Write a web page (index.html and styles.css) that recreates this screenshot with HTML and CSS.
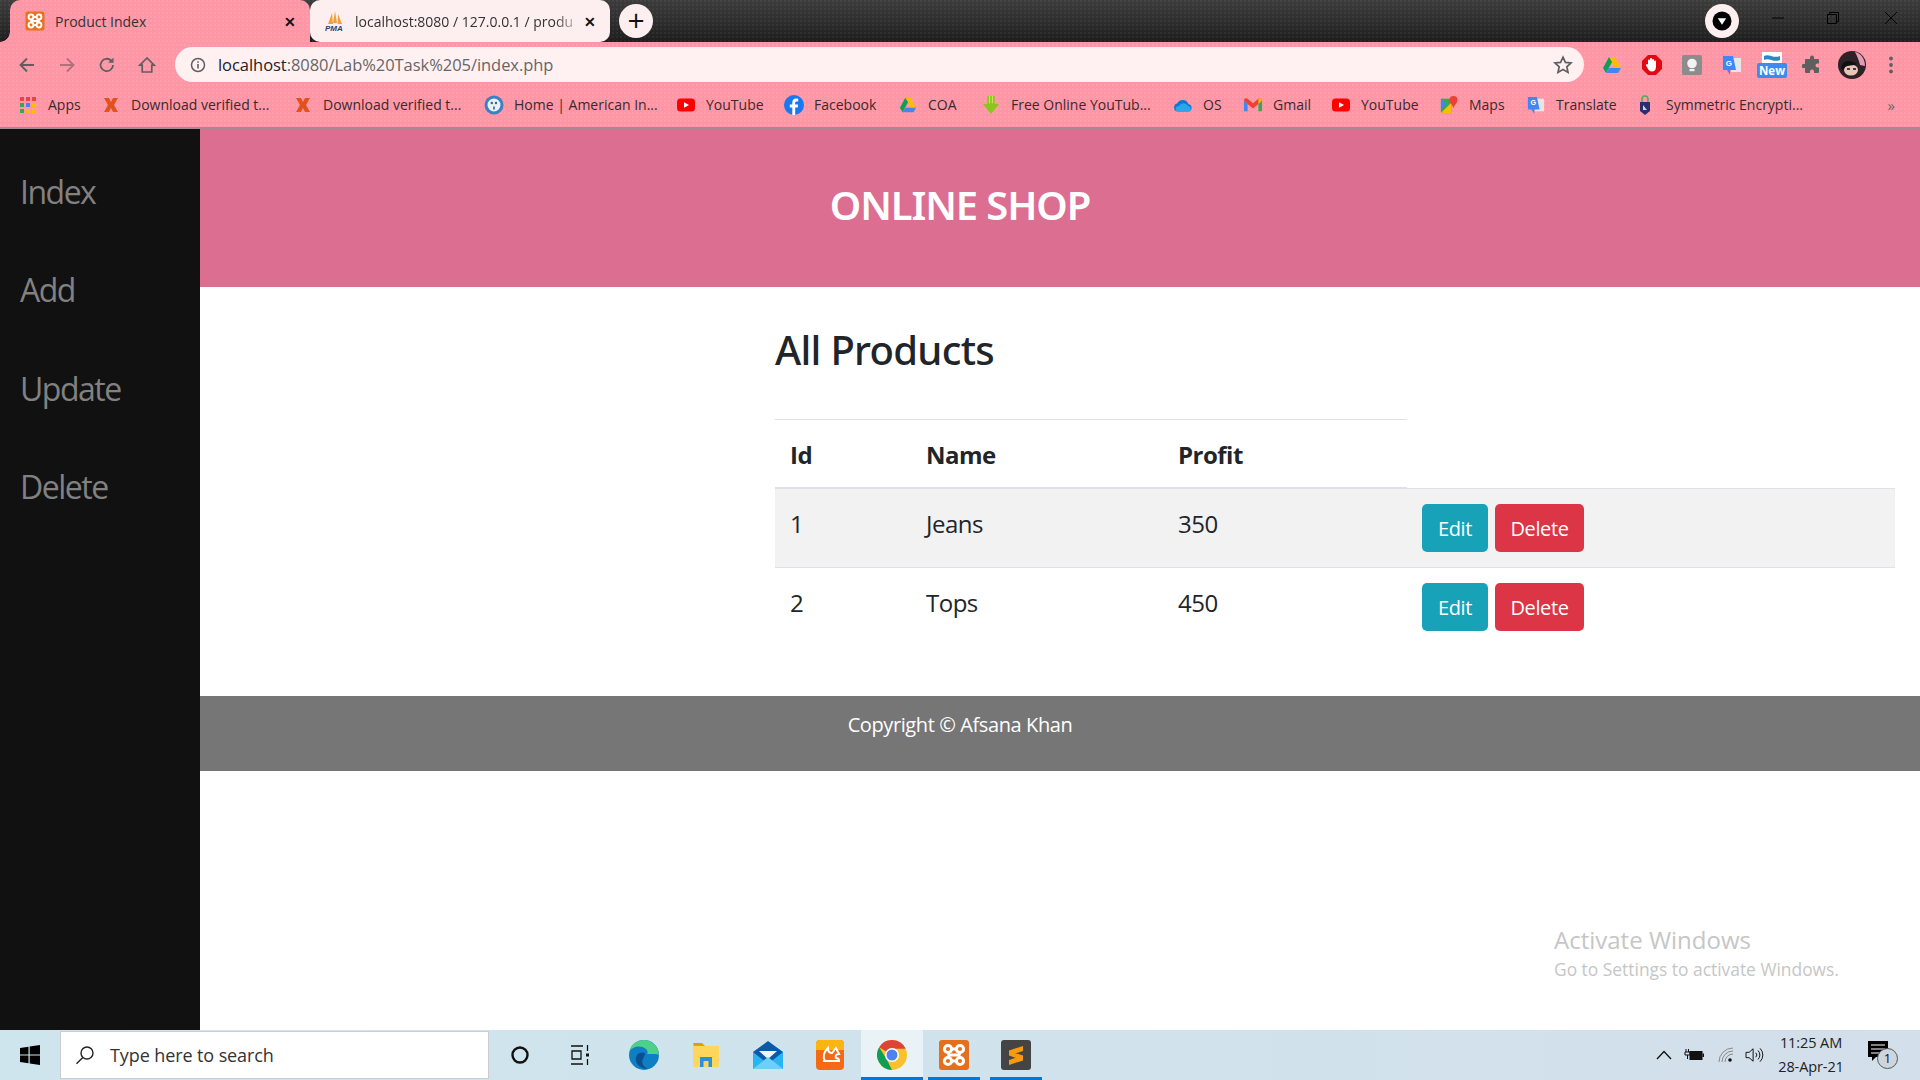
FILE: index.html
```html
<!DOCTYPE html>
<html lang="en">
<head>
  <meta charset="UTF-8" />
  <title>Product Index</title>
  <link rel="stylesheet" href="styles.css">
</head>
<body>
  <div class="browser">
    <div class="tabstrip">
      <div class="tab tab-active">
        <svg class="favicon" viewBox="0 0 20 20"><rect x="0.500" y="0.500" width="19" height="19" rx="2.500" fill="#e8701f"/><g fill="none" stroke="#fff" stroke-width="2"><circle cx="6" cy="6" r="2.400"/><circle cx="14" cy="6" r="2.400"/><circle cx="6" cy="14" r="2.400"/><circle cx="14" cy="14" r="2.400"/><path d="M6 8.400c0 1 1 1.600 1.500 1.600S6 10.600 6 11.600M14 8.400c0 1-1 1.600-1.500 1.600s1.500.6 1.500 1.600M8.400 6h3.200M8.400 14h3.200M7.500 10h5"/></g></svg>
        <span class="tab-title">Product Index</span>
        <span class="tab-close">✕</span>
      </div>
      <div class="tab tab-other">
        <svg class="favicon" viewBox="0 0 20 20"><path d="M3 13 7 2l1 11zM8 12l2-12 2 12zM12.500 13 13 3l4 10z" fill="#f0a23a"/><text x="0" y="19.500" class="pma">PMA</text></svg>
        <span class="tab-title tab-fade">localhost:8080 / 127.0.0.1 / produ</span>
        <span class="tab-close">✕</span>
      </div>
      <div class="new-tab">+</div>
      <div class="frame-right">
        <div class="profile-dot"><svg viewBox="0 0 22 22" width="22" height="22"><circle cx="11" cy="11" r="9.500" fill="#000"/><path d="M6.800 8.200h8.400L11 14.800z" fill="#fff"/></svg></div>
        <svg class="win-btn win-min" viewBox="0 0 14 14"><path d="M1 7h12" stroke="#000" fill="none"/></svg>
        <svg class="win-btn win-max" viewBox="0 0 14 14"><path d="M1.500 3.500h9v9h-9zM3.500 3.500v-2h9v9h-2" stroke="#000" fill="none"/></svg>
        <svg class="win-btn win-close" viewBox="0 0 14 14"><path d="M1 1l12 12M13 1 1 13" stroke="#000" fill="none"/></svg>
      </div>
    </div>

    <div class="toolbar">
      <svg class="nav-icon" viewBox="0 0 20 20"><path d="M17 10H4M10 3.500 3.500 10l6.500 6.500" fill="none" stroke="#5f5f5f" stroke-width="1.800"/></svg>
      <svg class="nav-icon" viewBox="0 0 20 20"><path d="M3 10h13M10 3.500l6.500 6.500-6.500 6.500" fill="none" stroke="#b0717c" stroke-width="1.800"/></svg>
      <svg class="nav-icon" viewBox="0 0 20 20"><path d="M16 10a6.200 6.200 0 1 1-1.800-4.400" fill="none" stroke="#5f5f5f" stroke-width="1.800"/><path d="M16.500 2.500v5.300h-5.300z" fill="#5f5f5f"/></svg>
      <svg class="nav-icon nav-home" viewBox="0 0 20 20"><path d="M10 3 2.800 10.200h2.400V17h9.600v-6.800h2.400z" fill="none" stroke="#5f5f5f" stroke-width="1.700"/></svg>
      <div class="omnibox">
        <svg class="info-icon" viewBox="0 0 16 16"><circle cx="8" cy="8" r="6.500" fill="none" stroke="#5f5f5f" stroke-width="1.500"/><path d="M8 7v4.500M8 4.300v1.500" stroke="#5f5f5f" stroke-width="1.600"/></svg>
        <span class="url"><span class="url-host">localhost</span>:8080/Lab%20Task%205/index.php</span>
        <svg class="star-icon" viewBox="0 0 20 20"><path d="m10 2.200 2.400 5.200 5.600.6-4.200 3.800 1.200 5.600-5-2.900-5 2.900 1.200-5.600L2 8l5.600-.6z" fill="none" stroke="#5f5f5f" stroke-width="1.700"/></svg>
      </div>
      <div class="ext-icons">
        <svg class="ext" viewBox="0 0 20 20"><path d="M7 2h6l6 11h-6z" fill="#fbbc04"/><path d="M7 2 1 13l3 5 6-11z" fill="#0f9d58"/><path d="M4 18h12l3-5H7z" fill="#4285f4"/></svg>
        <svg class="ext" viewBox="0 0 20 20"><path d="M6 0h8l6 6v8l-6 6H6l-6-6V6z" fill="#e30613"/><path d="M6 9V5.500a1 1 0 0 1 2 0V4a1 1 0 0 1 2 0v1a1 1 0 0 1 2 0v1.500a1 1 0 0 1 2 0V12c0 3-2 4.500-4 4.500-2.500 0-3.500-1.500-4.500-3.500L4 10.500c-.5-1 .8-1.800 1.500-1z" fill="#fff"/></svg>
        <svg class="ext" viewBox="0 0 20 20"><rect width="20" height="20" rx="2" fill="#8c8c8c"/><circle cx="10" cy="8.500" r="4.800" fill="#f2f2f2"/><rect x="7.500" y="14" width="5" height="2.200" fill="#f2f2f2"/></svg>
        <svg class="ext" viewBox="0 0 20 20"><path d="M9 3h10v14H9z" fill="#e6e6e6"/><path d="M1 1h10l3 14H8v5l-3-5H1z" fill="#4285f4"/><text x="3.800" y="10.500" class="ext-g">G</text></svg>
        <div class="ext ext-new"><svg viewBox="0 0 20 12"><rect width="20" height="12" fill="#fff"/><path d="M2 4c5-3 9 3 16 0v4C11 11 7 5 2 8z" fill="#2e86c9"/></svg><span class="new-label">New</span></div>
        <svg class="ext" viewBox="0 0 20 20"><path d="M8 2.500a2 2 0 0 1 4 0V4h4a1 1 0 0 1 1 1v3.500h-1.500a2 2 0 0 0 0 4H17V17a1 1 0 0 1-1 1h-4v-1.500a2 2 0 0 0-4 0V18H4a1 1 0 0 1-1-1v-4H1.500a2 2 0 0 1 0-4H3V5a1 1 0 0 1 1-1h4z" fill="#5f5f5f"/></svg>
        <svg class="ext ext-avatar" viewBox="0 0 28 28"><circle cx="14" cy="14" r="14" fill="#2e2226"/><path d="M17 1c6 1 10 7 10 14l-5-1c-1-5-3-9-5-13z" fill="#e59ab5"/><ellipse cx="13" cy="19" rx="7" ry="5.500" fill="#e9c6b8"/><path d="M3 17C4 9 12 8 19 13c-4 2-9 1-12 3-1 2-2 4-4 1z" fill="#111"/><path d="M9 18h3M15 18h3" stroke="#111" stroke-width="1.500"/></svg>
        <svg class="ext ext-dots" viewBox="0 0 20 20"><circle cx="10" cy="3.500" r="1.900" fill="#5f5f5f"/><circle cx="10" cy="10" r="1.900" fill="#5f5f5f"/><circle cx="10" cy="16.500" r="1.900" fill="#5f5f5f"/></svg>
      </div>
    </div>

    <div class="bookmarks">
      <div class="bm"><svg class="bm-icon bm-small" viewBox="0 0 16 16"><rect x="0" y="0" width="4" height="4" fill="#e8453c"/><rect x="6" y="0" width="4" height="4" fill="#e8453c"/><rect x="12" y="0" width="4" height="4" fill="#e8453c"/><rect x="0" y="6" width="4" height="4" fill="#34a853"/><rect x="6" y="6" width="4" height="4" fill="#4285f4"/><rect x="12" y="6" width="4" height="4" fill="#fbbc04"/><rect x="0" y="12" width="4" height="4" fill="#34a853"/><rect x="6" y="12" width="4" height="4" fill="#fbbc04"/><rect x="12" y="12" width="4" height="4" fill="#fbbc04"/></svg>Apps</div>
      <div class="bm"><svg class="bm-icon bm-small" viewBox="0 0 16 16"><path d="M1 1h5l2 4 2-4h5l-4 7 4 7h-5l-2-4-2 4H1l4-7z" fill="#e2521d"/></svg>Download verified t...</div>
      <div class="bm"><svg class="bm-icon bm-small" viewBox="0 0 16 16"><path d="M1 1h5l2 4 2-4h5l-4 7 4 7h-5l-2-4-2 4H1l4-7z" fill="#e2521d"/></svg>Download verified t...</div>
      <div class="bm"><svg class="bm-icon bm-wide" viewBox="0 0 20 20"><circle cx="10" cy="10" r="9.500" fill="#3f7fbf"/><circle cx="10" cy="10" r="6.500" fill="#e9f1f8"/><circle cx="7.800" cy="8" r="1.200" fill="#3f5f8f"/><circle cx="12" cy="8" r="1.200" fill="#3f5f8f"/><path d="M10 11.500v3" stroke="#3f5f8f" stroke-width="1.600"/></svg>Home | American In...</div>
      <div class="bm"><svg class="bm-icon" viewBox="0 0 18 18"><rect y="2.500" width="18" height="13" rx="3.500" fill="#f00"/><path d="M7 6.200 12 9l-5 2.800z" fill="#fff"/></svg>YouTube</div>
      <div class="bm"><svg class="bm-icon bm-wide" viewBox="0 0 20 20"><circle cx="10" cy="10" r="10" fill="#1877f2"/><path d="M11.200 20v-7.500h2.500l.4-3h-2.900V7.800c0-.9.300-1.400 1.500-1.400h1.500V3.700c-.3 0-1.200-.1-2.200-.1-2.200 0-3.700 1.300-3.700 3.800v2.100H5.800v3h2.500V20z" fill="#fff"/></svg>Facebook</div>
      <div class="bm"><svg class="bm-icon" viewBox="0 0 20 20"><path d="M7 2h6l6 11h-6z" fill="#fbbc04"/><path d="M7 2 1 13l3 5 6-11z" fill="#0f9d58"/><path d="M4 18h12l3-5H7z" fill="#4285f4"/></svg>COA</div>
      <div class="bm"><svg class="bm-icon" viewBox="0 0 18 20"><path d="M5 0h8v9h5l-9 11L0 9h5z" fill="#8bc61a"/><path d="M7 0h1v8H7zM10 0h1v8h-1z" fill="#d9ee6a"/></svg>Free Online YouTub...</div>
      <div class="bm"><svg class="bm-icon bm-wide" viewBox="0 0 20 14"><path d="M5 13.500a4 4 0 0 1-.8-7.900A6 6 0 0 1 15.300 6a3.800 3.800 0 0 1 .2 7.500z" fill="#0f78d4"/><path d="M4 13.500a3 3 0 0 1 2-5.500 5 5 0 0 1 9 0 3 3 0 0 1 1.500 5.500z" fill="#28a8ea"/></svg>OS</div>
      <div class="bm"><svg class="bm-icon" viewBox="0 0 20 16"><path d="M0 3v11a1 1 0 0 0 1 1h3V7z" fill="#4285f4"/><path d="M20 3v11a1 1 0 0 1-1 1h-3V7z" fill="#34a853"/><path d="M0 3c0-2.500 2.500-3 4-2l6 5 6-5c1.500-1 4-.5 4 2l-4 4-6 5-6-5z" fill="#ea4335"/><path d="M16 1c1.500-1 4-.5 4 2l-4 4z" fill="#fbbc04"/></svg>Gmail</div>
      <div class="bm"><svg class="bm-icon" viewBox="0 0 18 18"><rect y="2.500" width="18" height="13" rx="3.500" fill="#f00"/><path d="M7 6.200 12 9l-5 2.800z" fill="#fff"/></svg>YouTube</div>
      <div class="bm"><svg class="bm-icon" viewBox="0 0 20 20"><path d="M1 3h12v16H1z" fill="#35a853"/><path d="M1 19 13 7v12z" fill="#fbbc04"/><path d="M1 3l6 6-6 6z" fill="#4285f4"/><path d="M15 0a4.500 4.500 0 0 1 4.500 4.500c0 3-3.500 5.500-4.500 9-1-3.500-4.500-6-4.500-9A4.500 4.500 0 0 1 15 0z" fill="#ea4335"/></svg>Maps</div>
      <div class="bm"><svg class="bm-icon" viewBox="0 0 20 20"><path d="M9 3h10v14H9z" fill="#e6e6e6"/><path d="M1 1h10l3 14H8v5l-3-5H1z" fill="#4285f4"/><text x="3.800" y="10.500" class="ext-g">G</text></svg>Translate</div>
      <div class="bm"><svg class="bm-icon bm-thin" viewBox="0 0 12 20"><path d="M3 8V4a3 3 0 0 1 6 0v4" fill="none" stroke="#5aa469" stroke-width="1.600"/><path d="M1 7h10v9l-5 4-5-4z" fill="#2b2d6e"/><path d="M4 10l4 5H4z" fill="#c9d4ee"/></svg>Symmetric Encrypti...</div>
      <div class="bm-more">»</div>
    </div>
  </div>

  <div class="page">
    <nav class="sidenav">
      <a href="#">Index</a>
      <a href="#">Add</a>
      <a href="#">Update</a>
      <a href="#">Delete</a>
    </nav>
    <div class="main">
      <header class="site-header"><h1>ONLINE SHOP</h1></header>
      <section class="products">
        <h2>All Products</h2>
        <table class="product-table">
          <thead>
            <tr><th class="col-id">Id</th><th class="col-name">Name</th><th class="col-profit">Profit</th></tr>
          </thead>
          <tbody>
            <tr>
              <td>1</td><td>Jeans</td><td>350</td>
              <td class="actions"><a class="btn btn-edit" href="#">Edit</a><a class="btn btn-delete" href="#">Delete</a></td>
            </tr>
            <tr>
              <td>2</td><td>Tops</td><td>450</td>
              <td class="actions"><a class="btn btn-edit" href="#">Edit</a><a class="btn btn-delete" href="#">Delete</a></td>
            </tr>
          </tbody>
        </table>
      </section>
      <footer class="site-footer">Copyright © Afsana Khan</footer>
    </div>
    <div class="activate">
      <div class="activate-title">Activate Windows</div>
      <div class="activate-sub">Go to Settings to activate Windows.</div>
    </div>
  </div>

  <div class="taskbar">
    <div class="start"><svg viewBox="0 0 20 20" width="20" height="20"><path d="M0 3l8.500-1.200V9.500H0zM9.700 1.600 20 0v9.500H9.700zM0 10.600h8.500v7.700L0 17zM9.700 10.600H20V20L9.700 18.500z" fill="#000"/></svg></div>
    <div class="search">
      <svg class="search-icon" viewBox="0 0 20 20"><circle cx="12" cy="8" r="6" fill="none" stroke="#222" stroke-width="1.400"/><path d="M7.800 12.400 1.500 18.800" stroke="#222" stroke-width="1.400"/></svg>
      <span>Type here to search</span>
    </div>
    <div class="task-item"><svg viewBox="0 0 20 20" width="20" height="20"><circle cx="10" cy="10" r="7.500" fill="none" stroke="#111" stroke-width="2.400"/></svg></div>
    <div class="task-item"><svg viewBox="2 0 22 22" width="22" height="22"><path d="M1 2h13M1 20h13M3 7h9v8H3zM18.500 1v6M18.500 15v6" fill="none" stroke="#111" stroke-width="1.300"/><rect x="17" y="9.500" width="3" height="3" fill="#111"/></svg></div>
    <div class="task-item"><svg viewBox="0 0 30 30" width="30" height="30"><circle cx="15" cy="15" r="15" fill="#0f7fc4"/><path d="M30 16C30 6 22 0 15 0 8 0 2 4 .5 11 4 6 12 5 17 9c2 2 2 4 1 5h5c4 0 7 0 7 2z" fill="#4dd08a"/><path d="M16 13c-6-2-10 2-9 8 1 5 7 8 12 8-5-2-7-7-5-10 1-2 2-4 2-6z" fill="#0a4f8f"/></svg></div>
    <div class="task-item"><svg viewBox="0 0 28 26" width="28" height="26"><path d="M1 2a1 1 0 0 1 1-1h8l3 3H2z" fill="#dfa100"/><path d="M1 4h26v20a1 1 0 0 1-1 1H2a1 1 0 0 1-1-1z" fill="#ffd65c"/><path d="M8 25V15h12v10h-3.500v-6h-5v6z" fill="#2b8fd9"/></svg></div>
    <div class="task-item"><svg viewBox="0 0 30 30" width="30" height="30"><path d="M0 12 15 1l15 11v17H0z" fill="#0a5aa8"/><path d="M6 11h18l-9 8z" fill="#f4f4f4"/><path d="M0 12l15 12L30 12v17H0z" fill="#29b6f0"/><path d="M0 29 15 17l15 12z" fill="#6fd0f7"/></svg></div>
    <div class="task-item"><svg viewBox="0 0 28 30" width="28" height="30"><rect width="28" height="30" rx="4" fill="#f66a14"/><path d="M0 4a4 4 0 0 1 4-4h20a4 4 0 0 1 4 4v6H0z" fill="#fbb511"/><path d="M9 21c-3-5 0-10 3-13 0 3 1 5 4 5l4-5 3 6c-3 0-4 2-3 4 2 0 3 1 3 3H8c0-1 0-1 1 0z" fill="none" stroke="#fff" stroke-width="2"/></svg></div>
    <div class="task-item task-active"><svg viewBox="0 0 30 30" width="30" height="30"><circle cx="15" cy="15" r="15" fill="#fbc02d"/><path d="M15 15 2.200 7.300A15 15 0 0 1 28.600 8.700H15z" fill="#db4437"/><path d="M15 30A15 15 0 0 1 2.200 7.300L10 20z" fill="#0f9d58"/><circle cx="15" cy="15" r="7" fill="#fff"/><circle cx="15" cy="15" r="5.500" fill="#4d82f0"/></svg></div>
    <div class="task-item task-open"><svg viewBox="0 0 20 20" width="30" height="30"><rect width="20" height="20" rx="2" fill="#e4701e"/><g fill="none" stroke="#fff" stroke-width="2"><circle cx="6" cy="6" r="2.400"/><circle cx="14" cy="6" r="2.400"/><circle cx="6" cy="14" r="2.400"/><circle cx="14" cy="14" r="2.400"/><path d="M6 8.400c0 1 1 1.600 1.500 1.600S6 10.600 6 11.600M14 8.400c0 1-1 1.600-1.500 1.600s1.500.6 1.500 1.600M8.400 6h3.200M8.400 14h3.200M7.500 10h5"/></g></svg></div>
    <div class="task-item task-open"><svg viewBox="0 0 30 30" width="30" height="30"><rect width="30" height="30" rx="3" fill="#444"/><path d="M22 6v5L8 15.500v-5zM8 11l14 4.500v5L8 15.500zM22 15.500v5L8 25v-5z" fill="#f79a0e"/></svg></div>
    <div class="tray">
      <svg class="tray-icon tray-up" viewBox="0 0 16 10"><path d="M1 9 8 1.500 15 9" fill="none" stroke="#111" stroke-width="1.300"/></svg>
      <svg class="tray-icon tray-battery" viewBox="0 0 20 12"><path d="M2 0v3M4.500 0v3M1 3h5v3H1zM3.500 6v4" stroke="#111" fill="none"/><rect x="6" y="2.500" width="12" height="8" fill="#111" stroke="#111"/><rect x="18.500" y="4.500" width="1.500" height="3.500" fill="#111"/></svg>
      <svg class="tray-icon tray-wifi" viewBox="0 0 16 16"><path d="M1 15A14 14 0 0 1 15 1M4 15A11 11 0 0 1 15 4M7 15a8 8 0 0 1 8-8" fill="none" stroke="#888"/><circle cx="12" cy="13" r="1.800" fill="#111"/></svg>
      <svg class="tray-icon tray-vol" viewBox="0 0 20 18"><path d="M1 6h3.500L9 2v14l-4.500-4H1zM12 6.500a3.500 3.500 0 0 1 0 5M14.500 4a7 7 0 0 1 0 10M16.800 1.500a10.500 10.500 0 0 1 0 15" fill="none" stroke="#111" stroke-width="1.100"/></svg>
      <div class="clock"><div>11:25 AM</div><div>28-Apr-21</div></div>
      <div class="notif">
        <svg viewBox="0 0 20 20" width="20" height="20"><path d="M0 0h20v16H8l-4 4v-4H0z" fill="#000"/><path d="M3 4h14M3 8h14M3 12h14" stroke="#fff" stroke-width="1.200"/></svg>
        <span class="notif-count">1</span>
      </div>
    </div>
  </div>
</body>
</html>
```

FILE: styles.css
```css
* {
  box-sizing: border-box;
  margin: 0;
  padding: 0;
}
:root {
  --ui-font: "Open Sans", "Noto Sans", sans-serif;
  --chrome-pink: #ff96a5;
  --dots: radial-gradient(circle at 1px 1px, rgba(255,255,255,0.08) 1px, transparent 1.200px);
  --frame-dots: radial-gradient(circle at 1px 1px, rgba(255,255,255,0.05) 1px, transparent 1.200px);
}
body {
  width: 1920px;
  height: 1080px;
  overflow: hidden;
  display: flex;
  flex-direction: column;
  font-family: var(--ui-font);
  background: #fff;
}

/* browser chrome */
.browser {
  flex: 0 0 129px;
  display: flex;
  flex-direction: column;
  background-color: var(--chrome-pink);
  background-image: var(--dots);
  background-size: 4px 4px;
  border-bottom: 2px solid #aa8a92;
}
.tabstrip {
  height: 42px;
  display: flex;
  align-items: stretch;
  padding-left: 10px;
  background-color: #262626;
  background-image: var(--frame-dots), linear-gradient(180deg, #3c3c3c 0%, #2e2e2e 50%, #1d1d1d 100%);
  background-size: 4px 4px, auto;
}
.tab {
  width: 300px;
  display: flex;
  align-items: center;
  padding: 0 12px 0 15px;
  font-size: 14px;
  line-height: 19px;
  color: #333;
  position: relative;
}
.tab-active {
  background-color: var(--chrome-pink);
  background-image: var(--dots);
  background-size: 4px 4px;
  border-radius: 10px 10px 0 0;
}
.tab-active::before {
  content: "";
  position: absolute;
  left: -10px;
  bottom: 0;
  width: 10px;
  height: 10px;
  background: radial-gradient(circle at 0 0, transparent 9.500px, var(--chrome-pink) 10px);
}
.tab-other {
  background: #fdeef0;
  border-radius: 10px;
}
.favicon {
  width: 20px;
  height: 20px;
  flex: none;
}
.pma {
  font: italic bold 8px "Liberation Sans", sans-serif;
  fill: #2b3f7e;
}
.tab-title {
  margin-left: 10px;
  flex: 1;
  white-space: nowrap;
  overflow: hidden;
}
.tab-fade {
  -webkit-mask-image: linear-gradient(90deg, #000 88%, transparent 100%);
}
.tab-close {
  font-size: 14px;
  font-weight: 700;
  color: #111;
  width: 16px;
  text-align: center;
}
.new-tab {
  width: 34px;
  height: 34px;
  margin: 4px 0 0 9px;
  border-radius: 50%;
  background: #fdeef0;
  color: #111;
  font-size: 30px;
  line-height: 31px;
  text-align: center;
}
.frame-right {
  margin-left: auto;
  display: flex;
  align-items: center;
}
.profile-dot {
  width: 34px;
  height: 34px;
  border-radius: 50%;
  background: #fdeef0;
  display: flex;
  align-items: center;
  justify-content: center;
}
.win-btn {
  width: 14px;
  height: 14px;
  margin-top: -6px;
}
.win-min {
  margin-left: 32px;
}
.win-max {
  margin-left: 41px;
}
.win-close {
  margin-left: 44px;
  margin-right: 22px;
}

.toolbar {
  height: 46px;
  display: flex;
  align-items: center;
  padding-left: 17px;
}
.nav-icon {
  width: 20px;
  height: 20px;
  margin-right: 20px;
}
.nav-home {
  margin-right: 18px;
}
.omnibox {
  width: 1409px;
  height: 35px;
  margin-top: -1px;
  background: #fff0f2;
  border-radius: 18px;
  display: flex;
  align-items: center;
  padding: 0 11px 0 15px;
  font-size: 16.500px;
}
.info-icon {
  width: 16px;
  height: 16px;
}
.url {
  margin-left: 12px;
  color: #666;
  letter-spacing: -0.050px;
}
.url-host {
  color: #222;
}
.star-icon {
  width: 20px;
  height: 20px;
  margin-left: auto;
}
.ext-icons {
  display: flex;
  align-items: center;
  margin-top: -1px;
  padding-left: 18px;
}
.ext {
  width: 20px;
  height: 20px;
  margin-right: 20px;
  flex: none;
}
.ext-new {
  width: 30px;
  height: 28px;
  margin: 0 15px 0 -5px;
  display: flex;
  flex-direction: column;
  align-items: center;
  position: relative;
  top: 1px;
}
.ext-new svg {
  width: 20px;
  height: 12px;
}
.new-label {
  width: 30px;
  height: 15px;
  margin-top: -1px;
  background: #3d8bf0;
  border-radius: 2px;
  color: #fff;
  font-size: 11.500px;
  font-weight: 700;
  line-height: 15px;
  text-align: center;
}
.ext-g {
  font: bold 8px "Liberation Sans", sans-serif;
  fill: #fff;
}
.ext-avatar {
  width: 28px;
  height: 28px;
  margin-left: -4px;
  margin-right: 15px;
}
.ext-dots {
  margin-right: 0;
}

.bookmarks {
  flex: 1;
  display: grid;
  grid-template-columns: 83px 192px 189px 193px 107px 115px 83px 191px 71px 88px 108px 87px 112px 248px 1fr;
  align-items: center;
  padding: 0 0 6px 20px;
  font-size: 14px;
  color: #3a2a2e;
  white-space: nowrap;
}
.bm {
  display: flex;
  align-items: center;
}
.bm-icon {
  width: 18px;
  height: 18px;
  margin-right: 11px;
  flex: none;
}
.bm-small {
  width: 16px;
  height: 16px;
  margin-right: 12px;
}
.bm-wide {
  width: 20px;
  height: 20px;
  margin-right: 10px;
}
.bm-thin {
  width: 12px;
  height: 20px;
  margin-right: 15px;
}
.bm-more {
  text-align: right;
  padding-right: 25px;
  color: #666;
  font-size: 15px;
}

/* page */
.page {
  flex: 1;
  display: flex;
  position: relative;
  background: #fff;
}
.sidenav {
  width: 200px;
  background: #111;
  padding-top: 41px;
}
.sidenav a {
  display: block;
  height: 98.400px;
  padding-left: 20px;
  font-size: 32px;
  line-height: 44px;
  letter-spacing: -1.500px;
  color: #818181;
  text-decoration: none;
}
.main {
  flex: 1;
  display: flex;
  flex-direction: column;
}
.site-header {
  height: 158px;
  background: #dc6e91;
  padding: 51px 200px 0 0;
  text-align: center;
  color: #fff;
}
.site-header h1 {
  font-family: "Noto Sans", sans-serif;
  font-size: 40px;
  font-weight: 600;
  line-height: 50px;
  letter-spacing: -1.100px;
}
.products {
  height: 409px;
  padding: 36px 25px 0 575px;
}
.products h2 {
  font-family: "Noto Sans", sans-serif;
  font-size: 40px;
  font-weight: 500;
  line-height: 54px;
  letter-spacing: -0.700px;
  color: #212529;
  margin-bottom: 42px;
}
.product-table {
  width: 100%;
  border-collapse: collapse;
  font-size: 24px;
  letter-spacing: -0.500px;
  color: #212529;
  table-layout: fixed;
}
.product-table th,
.product-table td {
  padding: 15px;
  line-height: 36px;
  text-align: left;
  vertical-align: top;
}
.product-table th {
  padding-top: 17px;
  padding-bottom: 14px;
  border-top: 1px solid #dee2e6;
  border-bottom: 2px solid #dee2e6;
  font-weight: 700;
}
.product-table td {
  padding-top: 17px;
  border-top: 1px solid #dee2e6;
}
.product-table tbody tr:first-child {
  background: #f2f2f2;
}
.col-id {
  width: 136px;
}
.col-name {
  width: 252px;
}
.col-profit {
  width: 244px;
}
.product-table .actions {
  padding-top: 15px;
  display: flex;
  gap: 7px;
}
.btn {
  display: block;
  height: 48px;
  border-radius: 5px;
  color: #fff;
  font-size: 20px;
  line-height: 50px;
  text-align: center;
  text-decoration: none;
  letter-spacing: -0.400px;
}
.btn-edit {
  width: 66px;
  background: #17a2b8;
}
.btn-delete {
  width: 89px;
  background: #dc3545;
}
.site-footer {
  height: 75px;
  background: #767676;
  color: #fff;
  padding: 14px 200px 0 0;
  text-align: center;
  font-size: 20px;
  line-height: 30px;
  letter-spacing: -0.400px;
}
.activate {
  position: absolute;
  left: 1554px;
  top: 795px;
  color: #c6c6c6;
}
.activate-title {
  font-size: 24px;
  line-height: 32px;
}
.activate-sub {
  font-size: 17.400px;
  line-height: 26px;
}

/* taskbar */
.taskbar {
  flex: 0 0 50px;
  display: flex;
  background: linear-gradient(90deg, #cfe5ee 0%, #d0e3ec 45%, #d3dfea 100%);
}
.start {
  width: 60px;
  display: flex;
  align-items: center;
  justify-content: center;
}
.search {
  width: 429px;
  margin: 1px 0;
  background: #fff;
  border: 1px solid #ccc;
  display: flex;
  align-items: center;
  padding-left: 14px;
  font-size: 18px;
  letter-spacing: -0.100px;
  color: #333;
}
.search-icon {
  width: 20px;
  height: 20px;
  margin-right: 15px;
}
.task-item {
  width: 62px;
  height: 50px;
  display: flex;
  align-items: center;
  justify-content: center;
  position: relative;
}
.task-active {
  background: #e9f3f7;
}
.task-active::after,
.task-open::after {
  content: "";
  position: absolute;
  left: 0;
  right: 0;
  bottom: 0;
  height: 3px;
  background: #0078d7;
}
.task-open::after {
  left: 5px;
  right: 5px;
}
.tray {
  margin-left: auto;
  display: flex;
  align-items: center;
  padding-right: 32px;
}
.tray-icon {
  width: 16px;
  height: 16px;
  margin-right: 15px;
}
.tray-up {
  margin-right: 12px;
}
.tray-battery {
  width: 20px;
  margin-right: 14px;
}
.tray-wifi {
  margin-right: 10px;
}
.tray-vol {
  width: 20px;
  margin-right: 12px;
}
.clock {
  width: 70px;
  text-align: center;
  font-size: 14.500px;
  line-height: 24px;
  letter-spacing: -0.100px;
  color: #222;
}
.notif {
  margin-left: 22px;
  position: relative;
  height: 28px;
}
.notif-count {
  position: absolute;
  left: 9px;
  top: 7px;
  width: 21px;
  height: 21px;
  border-radius: 50%;
  background: #cdd6df;
  border: 1px solid #555;
  font-size: 13px;
  line-height: 19px;
  text-align: center;
  color: #111;
}
```
